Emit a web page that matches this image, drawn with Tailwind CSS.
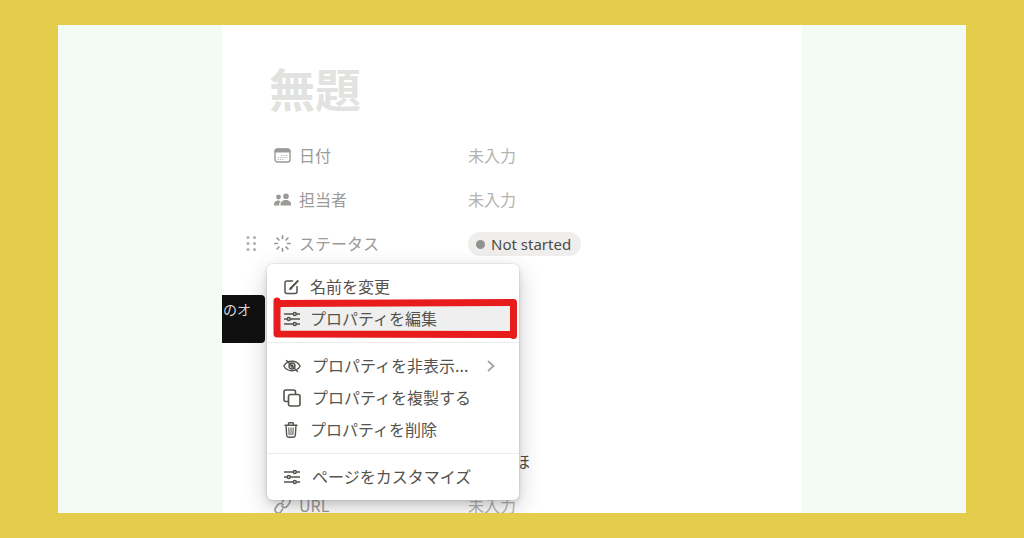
<!DOCTYPE html>
<html lang="ja">
<head>
    <meta charset="UTF-8">
    <meta name="viewport" content="width=device-width, initial-scale=1.0">
    <title>無題</title>
    <script src="https://cdn.jsdelivr.net/npm/@tailwindcss/browser@4"></script>
</head>
<body class="bg-[#e4cd4b] h-screen px-[58px] py-[25px] font-['Noto_Sans_CJK_JP',sans-serif] text-base text-[#9b9a97]">
    <div class="bg-[#f4fbf7] h-full overflow-hidden">
        <main class="relative bg-white h-full max-w-[580px] mx-auto px-[47px] pt-[34px] overflow-hidden">
            <input
                type="text"
                aria-label="タイトル"
                placeholder="無題"
                class="block w-full h-14 mb-[18px] text-[46px] font-bold text-[#37352f] placeholder:text-[#e2e2e0] focus:outline-none">

            <!-- Properties -->
            <div class="px-[5px]">
                <div class="flex items-center h-11">
                    <button class="flex items-center gap-2 w-[194px]">
                        <svg class="w-[17px] h-[17px]" viewBox="0 0 17 17" fill="none" stroke="currentColor">
                            <rect x="1" y="2" width="15" height="13" rx="2.5" stroke-width="1.4"/>
                            <path d="M1 5V4a2 2 0 0 1 2-2h11a2 2 0 0 1 2 2v1z" fill="currentColor"/>
                            <path d="M7 8.5h7M3.5 10.5h10M3.5 12.5h7" stroke-width="1.2" stroke-dasharray="1.4 .9" opacity=".7"/>
                        </svg>
                        日付
                    </button>
                    <button class="text-[#b4b3b0]">未入力</button>
                </div>

                <div class="flex items-center h-11">
                    <button class="flex items-center gap-2 w-[194px]">
                        <svg class="w-[17px] h-[17px]" viewBox="0 0 17 17" fill="currentColor">
                            <circle cx="4.5" cy="6" r="2.4"/>
                            <circle cx="12" cy="5.3" r="2.8"/>
                            <path d="M0 14.5v-1.2C0 11 2 9.500 4.500 9.500c.9 0 1.600.2 2.200.5-1.100 1-1.500 2.300-1.500 4.500z"/>
                            <path d="M6.500 14.500V13.300c0-2.600 2.300-4.300 5.300-4.300s5.200 1.700 5.200 4.300v1.200z"/>
                        </svg>
                        担当者
                    </button>
                    <button class="text-[#b4b3b0]">未入力</button>
                </div>

                <div class="relative z-10 flex items-center h-11">
                    <button aria-label="ドラッグ" class="absolute right-full mr-[17px]">
                        <svg class="w-[11px] h-[17px]" viewBox="0 0 11 17" fill="#b4b3b0">
                            <circle cx="2" cy="2.5" r="1.6"/><circle cx="8.5" cy="2.5" r="1.6"/>
                            <circle cx="2" cy="8.5" r="1.6"/><circle cx="8.5" cy="8.5" r="1.6"/>
                            <circle cx="2" cy="14.5" r="1.6"/><circle cx="8.5" cy="14.5" r="1.6"/>
                        </svg>
                    </button>
                    <button class="flex items-center gap-2 w-[194px]">
                        <svg class="w-[17px] h-[17px]" viewBox="0 0 17 17" fill="none" stroke="currentColor" stroke-width="1.7" stroke-linecap="round">
                            <path d="M8.500.9v2.600M8.500 13.500v2.600M.9 8.500h2.600M13.500 8.500h2.600M3.100 3.100l1.900 1.900M12 12l1.900 1.900M3.100 13.900l1.900-1.900M12 5l1.900-1.900"/>
                        </svg>
                        ステータス
                    </button>
                    <button class="flex items-center gap-1.5 h-6 pl-2 pr-2.5 mt-0.5 rounded-full bg-[#efeeec] text-[#4d4b46] text-[15px] font-['Noto_Sans',sans-serif]">
                        <span class="size-[9px] rounded-full bg-[#91918e]"></span>
                        Not started
                    </button>

                    <!-- Property menu -->
                    <div role="menu" class="absolute top-[43px] -left-[7px] w-[252px] rounded-md bg-white text-[#55534d] shadow-[0_0_0_1px_rgba(15,15,15,0.05),0_3px_6px_rgba(15,15,15,0.12),0_8px_24px_rgba(15,15,15,0.2)]">
                        <div class="absolute right-full mr-0.5 top-[31px] h-12 w-32 pt-1 pr-[14px] rounded bg-[#0f0f0f] text-right text-sm text-[#d8d8d6]">のオ</div>

                        <div class="py-[7px]">
                            <button role="menuitem" class="flex items-center gap-2.5 w-full h-8 px-[17px]">
                                <svg class="size-4 shrink-0" viewBox="0 0 16 16" fill="none" stroke="currentColor" stroke-width="1.5" stroke-linecap="round" stroke-linejoin="round">
                                    <path d="M8.500 2H3a2 2 0 0 0-2 2v8.500a2 2 0 0 0 2 2h8a2 2 0 0 0 2-2V7.500"/>
                                    <path d="M7 9L13.800 2" stroke-width="1.900"/>
                                    <path d="M5.600 10.400l.8-2.200 1.400 1.400z" fill="currentColor" stroke-width=".8"/>
                                </svg>
                                <span class="pb-0.5">名前を変更</span>
                            </button>
                            <div class="relative">
                                <div class="absolute inset-y-0.5 left-2.5 right-2 bg-[#efefef]"></div>
                                <button role="menuitem" class="relative flex items-center gap-2.5 w-full h-8 px-[17px]">
                                    <svg class="size-4 shrink-0" viewBox="0 0 16 16" fill="none" stroke="currentColor" stroke-width="1.5">
                                        <path d="M0 3h9M12.500 3h3.500M0 8h3M6.500 8h9.500M0 13h9M12.500 13h3.500"/>
                                        <circle cx="10.800" cy="3" r="1.500"/><circle cx="4.800" cy="8" r="1.500"/><circle cx="10.800" cy="13" r="1.500"/>
                                    </svg>
                                    <span class="pb-0.5">プロパティを編集</span>
                                </button>
                                <!-- Red marker -->
                                <svg class="absolute left-[5px] -top-[7px] w-[246px] h-[46px] pointer-events-none" viewBox="0 0 246 46" fill="none" stroke="#e81c1c" stroke-width="7" stroke-linecap="round" stroke-linejoin="round">
                                    <path d="M5 5V38L241.500 38.500V6.500L5 7.500M241.500 38.500V39.500"/>
                                </svg>
                            </div>
                        </div>

                        <div class="py-[7px] border-t border-[#ececeb]">
                            <button role="menuitem" class="flex items-center gap-[11px] w-full h-8 px-4">
                                <svg class="w-[18px] h-4 shrink-0" viewBox="0 0 18 16" fill="none" stroke="currentColor" stroke-width="1.4" stroke-linecap="round">
                                    <path d="M.8 8C2.500 5 5.500 3.200 9 3.200S15.500 5 17.200 8C15.500 11 12.500 12.800 9 12.800S2.500 11 .8 8z"/>
                                    <circle cx="9" cy="8" r="3"/>
                                    <circle cx="9" cy="8" r="1" fill="currentColor"/>
                                    <path d="M3.500 2.500l11 11"/>
                                </svg>
                                <span class="pb-0.5">プロパティを非表示...</span>
                                <svg class="w-2 h-3 ml-2 text-[#a5a4a1]" viewBox="0 0 8 12" fill="none" stroke="currentColor" stroke-width="1.8">
                                    <path d="M1 1l5.500 5L1 11"/>
                                </svg>
                            </button>
                            <button role="menuitem" class="flex items-center gap-[11px] w-full h-8 px-4">
                                <svg class="w-[18px] h-[18px] shrink-0" viewBox="0 0 18 18" fill="none" stroke="currentColor" stroke-width="1.6" stroke-linejoin="round">
                                    <rect x="5.500" y="5.500" width="11.500" height="11.500" rx="2"/>
                                    <path d="M5.500 12.500H3a2 2 0 0 1-2-2V3a2 2 0 0 1 2-2h7.500a2 2 0 0 1 2 2v2.500"/>
                                </svg>
                                <span class="pb-0.5">プロパティを複製する</span>
                            </button>
                            <button role="menuitem" class="flex items-center gap-2.5 w-full h-8 px-[17px]">
                                <svg class="size-4 shrink-0" viewBox="0 0 16 16" fill="none" stroke="currentColor" stroke-width="1.4" stroke-linecap="round" stroke-linejoin="round">
                                    <path d="M1 3.300h12M4.500 3.300V1.500a.8.8 0 0 1 .8-.8h3.400a.8.8 0 0 1 .8.8v1.800M2 3.300l.7 10.200a1.800 1.800 0 0 0 1.800 1.700h5a1.800 1.800 0 0 0 1.800-1.700l.7-10.200"/>
                                    <path d="M4.800 5.800l.3 7M7 5.800v7M9.200 5.800l-.3 7" stroke-width="1"/>
                                </svg>
                                <span class="pb-0.5">プロパティを削除</span>
                            </button>
                        </div>

                        <div class="py-[7px] border-t border-[#ececeb]">
                            <button role="menuitem" class="flex items-center gap-[11px] w-full h-8 px-4">
                                <svg class="w-[18px] h-4 shrink-0" viewBox="-1 0 18 16" fill="none" stroke="currentColor" stroke-width="1.5">
                                    <path d="M0 3h9M12.500 3h3.500M0 8h3M6.500 8h9.500M0 13h9M12.500 13h3.500"/>
                                    <circle cx="10.800" cy="3" r="1.500"/><circle cx="4.800" cy="8" r="1.500"/><circle cx="10.800" cy="13" r="1.500"/>
                                </svg>
                                <span class="pb-0.5">ページをカスタマイズ</span>
                            </button>
                        </div>
                    </div>
                </div>

                <!-- Rows covered by the menu -->
                <div class="flex items-center h-11 mt-[174px]">
                    <span class="ml-60 text-[#4b4943]">ほ</span>
                </div>

                <div class="flex items-center h-11">
                    <button class="flex items-center gap-2 w-[194px]">
                        <svg class="w-[17px] h-[17px]" viewBox="0 0 17 17" fill="none" stroke="currentColor" stroke-width="1.5" stroke-linecap="round">
                            <path d="M8.300 5.200l1.800-2.800a3.200 3.200 0 0 1 5.300 3.600l-2.200 3.300a3.200 3.200 0 0 1-5.300-.2"/>
                            <path d="M8.700 11.800l-1.800 2.800a3.200 3.200 0 0 1-5.300-3.600l2.200-3.300a3.200 3.200 0 0 1 5.300.2"/>
                        </svg>
                        URL
                    </button>
                    <button class="text-[#b4b3b0]">未入力</button>
                </div>
            </div>
        </main>
    </div>
</body>
</html>
